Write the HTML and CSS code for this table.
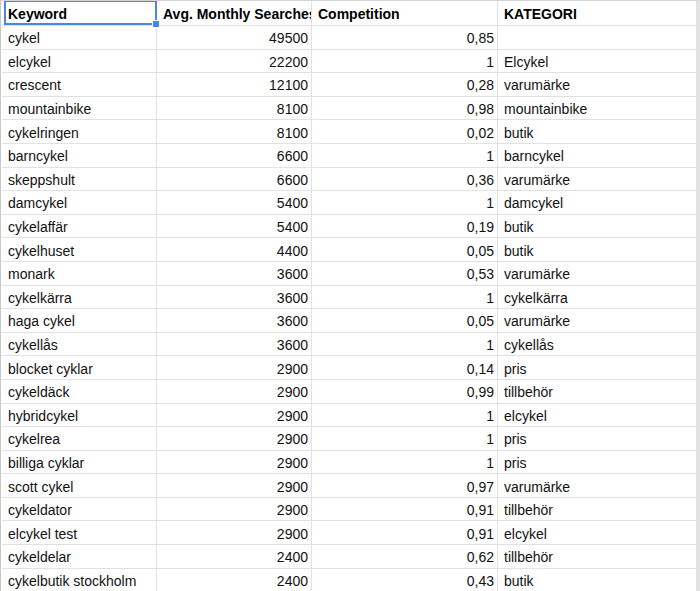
FILE: index.html
```html
<!DOCTYPE html>
<html lang="sv">
<head>
<meta charset="utf-8">
<title>Keywords</title>
<link rel="stylesheet" href="styles.css">
</head>
<body>
<div class="sheet">
  <div class="grid">
    <div class="c h">Keyword</div><div class="c h">Avg. Monthly Searches</div><div class="c h">Competition</div><div class="c h">KATEGORI</div>
    <div class="c">cykel</div><div class="c n">49500</div><div class="c n">0,85</div><div class="c"></div>
    <div class="c">elcykel</div><div class="c n">22200</div><div class="c n">1</div><div class="c">Elcykel</div>
    <div class="c">crescent</div><div class="c n">12100</div><div class="c n">0,28</div><div class="c">varumärke</div>
    <div class="c">mountainbike</div><div class="c n">8100</div><div class="c n">0,98</div><div class="c">mountainbike</div>
    <div class="c">cykelringen</div><div class="c n">8100</div><div class="c n">0,02</div><div class="c">butik</div>
    <div class="c">barncykel</div><div class="c n">6600</div><div class="c n">1</div><div class="c">barncykel</div>
    <div class="c">skeppshult</div><div class="c n">6600</div><div class="c n">0,36</div><div class="c">varumärke</div>
    <div class="c">damcykel</div><div class="c n">5400</div><div class="c n">1</div><div class="c">damcykel</div>
    <div class="c">cykelaffär</div><div class="c n">5400</div><div class="c n">0,19</div><div class="c">butik</div>
    <div class="c">cykelhuset</div><div class="c n">4400</div><div class="c n">0,05</div><div class="c">butik</div>
    <div class="c">monark</div><div class="c n">3600</div><div class="c n">0,53</div><div class="c">varumärke</div>
    <div class="c">cykelkärra</div><div class="c n">3600</div><div class="c n">1</div><div class="c">cykelkärra</div>
    <div class="c">haga cykel</div><div class="c n">3600</div><div class="c n">0,05</div><div class="c">varumärke</div>
    <div class="c">cykellås</div><div class="c n">3600</div><div class="c n">1</div><div class="c">cykellås</div>
    <div class="c">blocket cyklar</div><div class="c n">2900</div><div class="c n">0,14</div><div class="c">pris</div>
    <div class="c">cykeldäck</div><div class="c n">2900</div><div class="c n">0,99</div><div class="c">tillbehör</div>
    <div class="c">hybridcykel</div><div class="c n">2900</div><div class="c n">1</div><div class="c">elcykel</div>
    <div class="c">cykelrea</div><div class="c n">2900</div><div class="c n">1</div><div class="c">pris</div>
    <div class="c">billiga cyklar</div><div class="c n">2900</div><div class="c n">1</div><div class="c">pris</div>
    <div class="c">scott cykel</div><div class="c n">2900</div><div class="c n">0,97</div><div class="c">varumärke</div>
    <div class="c">cykeldator</div><div class="c n">2900</div><div class="c n">0,91</div><div class="c">tillbehör</div>
    <div class="c">elcykel test</div><div class="c n">2900</div><div class="c n">0,91</div><div class="c">elcykel</div>
    <div class="c">cykeldelar</div><div class="c n">2400</div><div class="c n">0,62</div><div class="c">tillbehör</div>
    <div class="c">cykelbutik stockholm</div><div class="c n">2400</div><div class="c n">0,43</div><div class="c">butik</div>
  </div>
  <div class="selection"><span class="handle"></span></div>
</div>
</body>
</html>
```

FILE: styles.css
```css
html, body {
  margin: 0;
  padding: 0;
  background: #fff;
  overflow: hidden;
}

.sheet {
  position: relative;
  width: 700px;
  height: 591px;
  box-sizing: border-box;
  border-left: 1px solid #c8c8c8;
  border-top: 1px solid #d4d4d4;
  border-right: 3px solid #e4e4e4;
  padding-left: 1px;
  overflow: hidden;
  font-family: "Liberation Sans", Arial, sans-serif;
  font-size: 14px;
  color: #111;
}

.grid {
  display: grid;
  grid-template-columns: 155px 155px 186px 199px;
  grid-template-rows: 25px repeat(24, 23.6px);
}

.c {
  box-sizing: border-box;
  border-right: 1px solid #e2e2e2;
  border-bottom: 1px solid #e2e2e2;
  padding: 2px 4px 0 6px;
  display: flex;
  align-items: center;
  white-space: nowrap;
  overflow: hidden;
}

.h {
  font-weight: bold;
  color: #000;
}

.n {
  justify-content: flex-end;
  padding-right: 3px;
}

.selection {
  position: absolute;
  left: 3px;
  top: 0;
  width: 153px;
  height: 24px;
  box-sizing: border-box;
  border: 2px solid #4a86e8;
  border-top-width: 1px;
  pointer-events: none;
}

.handle {
  position: absolute;
  right: -5px;
  bottom: -5px;
  width: 6px;
  height: 6px;
  background: #4a86e8;
  border: 1px solid #fff;
}
```
